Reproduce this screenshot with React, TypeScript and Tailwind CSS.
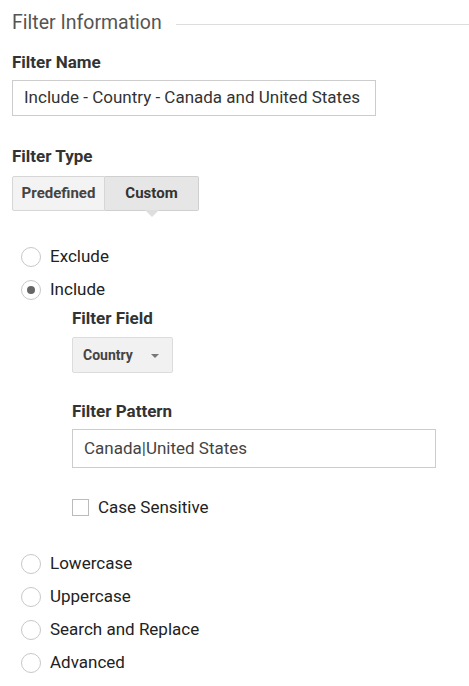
import React from "react";

const Radio = ({ label, checked }: { label: string; checked?: boolean }) => (
  <div className="flex items-center h-[33px]">
    <div className="ml-[21px] w-[20px] h-[20px] rounded-full border border-[#c8c8c8] bg-white flex items-center justify-center">
      {checked && <div className="w-[8px] h-[8px] rounded-full bg-[#666]" />}
    </div>
    <span className="ml-[9px] text-[17px] text-[#222]">{label}</span>
  </div>
);

export default function App() {
  return (
    <div
      className="w-[469px] h-[686px] bg-white overflow-hidden"
      style={{ fontFamily: "Roboto, Arial, sans-serif" }}
    >
      <div className="flex items-center pl-[12px] pt-[11px]">
        <span className="text-[19.5px] text-[#555] leading-[24px]">Filter Information</span>
        <div className="flex-1 ml-[14px] h-px bg-[#ddd] mt-[3px]" />
      </div>

      <div className="pl-[12px] mt-[17px] text-[17px] font-bold text-[#333] leading-[20px]">
        Filter Name
      </div>
      <div className="ml-[12px] mt-[8px] w-[364px] h-[36px] border border-[#ccc] flex items-center pl-[11px] text-[17px] text-[#333]">
        Include - Country - Canada and United States
      </div>

      <div className="pl-[12px] mt-[30px] text-[17px] font-bold text-[#333] leading-[20px]">
        Filter Type
      </div>
      <div className="ml-[12px] mt-[10px] flex relative w-[187px]">
        <div className="w-[93px] h-[35px] border border-[#d6d6d6] bg-[#f3f3f3] rounded-l-[2px] flex items-center justify-center text-[15px] font-bold text-[#444]">
          Predefined
        </div>
        <div className="w-[94px] h-[35px] border border-l-0 border-[#cfcfcf] bg-[#e6e6e6] rounded-r-[2px] flex items-center justify-center text-[15px] font-bold text-[#333] relative">
          Custom
          <div className="absolute left-1/2 -translate-x-1/2 top-full w-0 h-0 border-l-[7px] border-r-[7px] border-t-[7px] border-l-transparent border-r-transparent border-t-[#dedede]" />
        </div>
      </div>

      <div className="mt-[29px]">
        <Radio label="Exclude" />
        <Radio label="Include" checked />
      </div>

      <div className="pl-[72px]">
        <div className="mt-[2px] text-[17px] font-bold text-[#333] leading-[20px]">Filter Field</div>
        <div className="mt-[9px] w-[101px] h-[36px] border border-[#dcdcdc] bg-[#f1f1f1] rounded-[2px] flex items-center pl-[10px] text-[14px] font-bold text-[#444]">
          Country
          <div className="ml-[18px] mt-[2px] w-0 h-0 border-l-[4px] border-r-[4px] border-t-[4px] border-l-transparent border-r-transparent border-t-[#777]" />
        </div>

        <div className="mt-[28px] text-[17px] font-bold text-[#333] leading-[20px]">Filter Pattern</div>
        <div className="mt-[8px] w-[364px] h-[39px] border border-[#ccc] flex items-center pl-[11px] text-[17px] text-[#444]">
          Canada|United States
        </div>

        <div className="mt-[27px] flex items-center">
          <div className="w-[17px] h-[17px] border border-[#bbb] bg-white" />
          <span className="ml-[9px] text-[17px] text-[#222]">Case Sensitive</span>
        </div>
      </div>

      <div className="mt-[27px]">
        <Radio label="Lowercase" />
        <Radio label="Uppercase" />
        <Radio label="Search and Replace" />
        <Radio label="Advanced" />
      </div>
    </div>
  );
}
